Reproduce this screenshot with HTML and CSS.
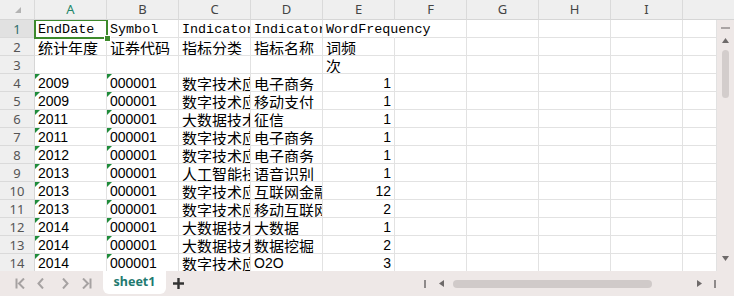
FILE: index.html
```html
<!DOCTYPE html>
<html lang="zh-CN">
<head>
    <meta charset="UTF-8">
    <title>sheet1</title>
    <link rel="stylesheet" href="styles.css">
</head>
<body>
<div class="app">
    <!-- column headers -->
    <div class="col-heads">
        <div class="col-head corner">
            <svg width="6" height="6" viewBox="0 0 6 6"><path d="M6 0V6H0Z" fill="#b3b3b3"/></svg>
        </div>
        <div class="col-head active">A</div>
        <div class="col-head">B</div>
        <div class="col-head">C</div>
        <div class="col-head">D</div>
        <div class="col-head">E</div>
        <div class="col-head">F</div>
        <div class="col-head">G</div>
        <div class="col-head">H</div>
        <div class="col-head">I</div>
        <div class="col-head filler"></div>
    </div>

    <div class="body">
        <div class="cells">
            <div class="row-head active">1</div>
            <div class="cell mono">EndDate</div>
            <div class="cell mono">Symbol</div>
            <div class="cell mono">Indicator</div>
            <div class="cell mono">Indicator</div>
            <div class="cell mono spill">WordFrequency</div>
            <div class="cell"></div><div class="cell"></div><div class="cell"></div><div class="cell"></div><div class="cell"></div>

            <div class="row-head">2</div>
            <div class="cell">统计年度</div>
            <div class="cell">证券代码</div>
            <div class="cell">指标分类</div>
            <div class="cell">指标名称</div>
            <div class="cell">词频</div>
            <div class="cell"></div><div class="cell"></div><div class="cell"></div><div class="cell"></div><div class="cell"></div>

            <div class="row-head">3</div>
            <div class="cell"></div><div class="cell"></div><div class="cell"></div><div class="cell"></div>
            <div class="cell">次</div>
            <div class="cell"></div><div class="cell"></div><div class="cell"></div><div class="cell"></div><div class="cell"></div>

            <div class="row-head">4</div>
            <div class="cell num txt">2009</div>
            <div class="cell num txt">000001</div>
            <div class="cell">数字技术应用</div>
            <div class="cell">电子商务</div>
            <div class="cell num right">1</div>
            <div class="cell"></div><div class="cell"></div><div class="cell"></div><div class="cell"></div><div class="cell"></div>

            <div class="row-head">5</div>
            <div class="cell num txt">2009</div>
            <div class="cell num txt">000001</div>
            <div class="cell">数字技术应用</div>
            <div class="cell">移动支付</div>
            <div class="cell num right">1</div>
            <div class="cell"></div><div class="cell"></div><div class="cell"></div><div class="cell"></div><div class="cell"></div>

            <div class="row-head">6</div>
            <div class="cell num txt">2011</div>
            <div class="cell num txt">000001</div>
            <div class="cell">大数据技术</div>
            <div class="cell">征信</div>
            <div class="cell num right">1</div>
            <div class="cell"></div><div class="cell"></div><div class="cell"></div><div class="cell"></div><div class="cell"></div>

            <div class="row-head">7</div>
            <div class="cell num txt">2011</div>
            <div class="cell num txt">000001</div>
            <div class="cell">数字技术应用</div>
            <div class="cell">电子商务</div>
            <div class="cell num right">1</div>
            <div class="cell"></div><div class="cell"></div><div class="cell"></div><div class="cell"></div><div class="cell"></div>

            <div class="row-head">8</div>
            <div class="cell num txt">2012</div>
            <div class="cell num txt">000001</div>
            <div class="cell">数字技术应用</div>
            <div class="cell">电子商务</div>
            <div class="cell num right">1</div>
            <div class="cell"></div><div class="cell"></div><div class="cell"></div><div class="cell"></div><div class="cell"></div>

            <div class="row-head">9</div>
            <div class="cell num txt">2013</div>
            <div class="cell num txt">000001</div>
            <div class="cell">人工智能技术</div>
            <div class="cell">语音识别</div>
            <div class="cell num right">1</div>
            <div class="cell"></div><div class="cell"></div><div class="cell"></div><div class="cell"></div><div class="cell"></div>

            <div class="row-head">10</div>
            <div class="cell num txt">2013</div>
            <div class="cell num txt">000001</div>
            <div class="cell">数字技术应用</div>
            <div class="cell">互联网金融</div>
            <div class="cell num right">12</div>
            <div class="cell"></div><div class="cell"></div><div class="cell"></div><div class="cell"></div><div class="cell"></div>

            <div class="row-head">11</div>
            <div class="cell num txt">2013</div>
            <div class="cell num txt">000001</div>
            <div class="cell">数字技术应用</div>
            <div class="cell">移动互联网</div>
            <div class="cell num right">2</div>
            <div class="cell"></div><div class="cell"></div><div class="cell"></div><div class="cell"></div><div class="cell"></div>

            <div class="row-head">12</div>
            <div class="cell num txt">2014</div>
            <div class="cell num txt">000001</div>
            <div class="cell">大数据技术</div>
            <div class="cell">大数据</div>
            <div class="cell num right">1</div>
            <div class="cell"></div><div class="cell"></div><div class="cell"></div><div class="cell"></div><div class="cell"></div>

            <div class="row-head">13</div>
            <div class="cell num txt">2014</div>
            <div class="cell num txt">000001</div>
            <div class="cell">大数据技术</div>
            <div class="cell">数据挖掘</div>
            <div class="cell num right">2</div>
            <div class="cell"></div><div class="cell"></div><div class="cell"></div><div class="cell"></div><div class="cell"></div>

            <div class="row-head">14</div>
            <div class="cell num txt">2014</div>
            <div class="cell num txt">000001</div>
            <div class="cell">数字技术应用</div>
            <div class="cell num">O2O</div>
            <div class="cell num right">3</div>
            <div class="cell"></div><div class="cell"></div><div class="cell"></div><div class="cell"></div><div class="cell"></div>

            <!-- selection box over A1 -->
            <div class="selection"><span class="handle"></span></div>
        </div>

        <div class="vscroll">
            <span class="vs-line"></span>
            <svg class="vs-up" width="7" height="5" viewBox="0 0 7 5"><path d="M3.5 0L7 5H0Z" fill="#6e6a6a"/></svg>
            <span class="vs-thumb"></span>
            <svg class="vs-down" width="7" height="5" viewBox="0 0 7 5"><path d="M0 0H7L3.5 5Z" fill="#6e6a6a"/></svg>
        </div>
    </div>

    <!-- sheet tabs -->
    <div class="tabbar">
        <div class="nav">
            <svg class="nav-first" width="10" height="11" viewBox="0 0 10 11"><path d="M1.5 0.5v10M9 0.5L4 5.5l5 5" fill="none" stroke="#a6a2a2" stroke-width="2"/></svg>
            <svg class="nav-prev" width="7" height="11" viewBox="0 0 7 11"><path d="M6 0.5L1.5 5.5 6 10.5" fill="none" stroke="#a6a2a2" stroke-width="2"/></svg>
            <svg class="nav-next" width="7" height="11" viewBox="0 0 7 11"><path d="M1 0.5l4.5 5-4.5 5" fill="none" stroke="#a6a2a2" stroke-width="2"/></svg>
            <svg class="nav-last" width="10" height="11" viewBox="0 0 10 11"><path d="M1 0.5l5 5-5 5M8.5 0.5v10" fill="none" stroke="#a6a2a2" stroke-width="2"/></svg>
        </div>
        <div class="tab">sheet1</div>
        <div class="add">
            <svg width="11" height="11" viewBox="0 0 11 11"><path d="M5.5 0v11M0 5.5h11" stroke="#333" stroke-width="2.4"/></svg>
        </div>

        <div class="hscroll">
            <span class="hs-bar"></span>
            <svg class="hs-left" width="5" height="7" viewBox="0 0 5 7"><path d="M5 0V7L0 3.5Z" fill="#6e6a6a"/></svg>
            <span class="hs-thumb"></span>
            <svg class="hs-right" width="5" height="7" viewBox="0 0 5 7"><path d="M0 0V7L5 3.5Z" fill="#6e6a6a"/></svg>
            <span class="hs-bar"></span>
        </div>
    </div>
</div>
</body>
</html>
```

FILE: styles.css
```css
body {
    margin: 0;
    background: #fff;
    font-family: "Noto Sans", "Liberation Sans", sans-serif;
}

.app {
    width: 734px;
    height: 296px;
    display: flex;
    flex-direction: column;
    overflow: hidden;
}

/* column headers */
.col-heads {
    flex: none;
    height: 20px;
    display: grid;
    grid-template-columns: 35px repeat(9, 72px) 1fr;
    background: #efefef;
}

.col-head {
    box-sizing: border-box;
    border-right: 1px solid #dadada;
    border-bottom: 1px solid #d6d6d6;
    text-align: center;
    font-size: 13px;
    line-height: 19px;
    color: #444;
}

.col-head.active {
    color: #22866a;
}

.col-head.filler {
    border-right: none;
}

.corner {
    display: flex;
    align-items: flex-end;
    justify-content: flex-start;
    padding: 0 0 6px 15px;
}

/* body */
.body {
    flex: 1;
    display: flex;
    min-height: 0;
}

.cells {
    flex: 1;
    display: grid;
    grid-template-columns: 35px repeat(9, 72px) 1fr;
    grid-auto-rows: 18px;
    overflow: hidden;
    position: relative;
}

.row-head {
    box-sizing: border-box;
    background: #efefef;
    border-right: 1px solid #d6d6d6;
    border-bottom: 1px solid #dadada;
    text-align: center;
    font-size: 13px;
    line-height: 18px;
    color: #555;
}

.row-head.active {
    background: #e1e1e1;
    color: #2f6e6c;
}

.cell {
    box-sizing: border-box;
    position: relative;
    border-right: 1px solid #e2e2e2;
    border-bottom: 1px solid #e2e2e2;
    padding: 1px 3px 0;
    overflow: hidden;
    white-space: nowrap;
    font-family: "Noto Sans CJK SC", sans-serif;
    font-size: 15px;
    line-height: 17px;
    color: #000;
}

.cell.mono {
    font-family: "Liberation Mono", monospace;
    font-size: 13.4px;
}

.cell.num {
    font-family: "Liberation Sans", sans-serif;
    font-size: 14px;
}

.cell.right {
    text-align: right;
}

.cell.spill {
    overflow: visible;
    border-right-color: transparent;
    z-index: 1;
}

/* number-stored-as-text marker */
.cell.txt::before {
    content: "";
    position: absolute;
    left: 0;
    top: 0;
    border-top: 5px solid #1f8c3a;
    border-right: 5px solid transparent;
}

.selection {
    position: absolute;
    left: 34px;
    top: -1px;
    width: 74px;
    height: 20px;
    box-sizing: border-box;
    border: 2px solid #3d8a2c;
    z-index: 2;
}

.handle {
    position: absolute;
    right: -5px;
    bottom: -5px;
    width: 5px;
    height: 5px;
    background: #3d8a2c;
    border: 1px solid #fff;
}

/* vertical scrollbar */
.vscroll {
    flex: none;
    width: 17px;
    background: #eee8e7;
    display: flex;
    flex-direction: column;
    align-items: center;
    padding-top: 7px;
    box-sizing: border-box;
}

.vs-line {
    width: 9px;
    height: 2px;
    background: #aaa4a4;
}

.vs-up {
    margin-top: 9px;
}

.vs-thumb {
    margin-top: 7px;
    width: 7px;
    height: 48px;
    border-radius: 4px;
    background: #d3cdcc;
}

.vs-down {
    margin-top: auto;
    margin-bottom: 10px;
}

/* sheet tabs */
.tabbar {
    flex: none;
    height: 25px;
    background: #eee8e7;
    display: flex;
    align-items: center;
}

.nav {
    flex: none;
    box-sizing: border-box;
    width: 103px;
    padding-left: 15px;
    display: flex;
    align-items: center;
}

.nav-prev {
    margin-left: 12px;
}

.nav-next {
    margin-left: 18px;
}

.nav-last {
    margin-left: 13px;
}

.tab {
    flex: none;
    align-self: flex-start;
    width: 63px;
    height: 23px;
    background: #fff;
    border-radius: 0 0 6px 6px;
    text-align: center;
    font-family: "Noto Sans", sans-serif;
    font-weight: bold;
    font-size: 12.5px;
    line-height: 22px;
    color: #1f7a70;
}

.add {
    flex: none;
    width: 24px;
    height: 11px;
    display: flex;
    justify-content: center;
}

.hscroll {
    flex: none;
    display: flex;
    align-items: center;
    margin-left: 234px;
}

.hs-bar {
    width: 2px;
    height: 8px;
    background: #8e8a8a;
}

.hs-left {
    margin: 0 9px 0 13px;
}

.hs-right {
    margin: 0 12px 0 45px;
}

.hs-thumb {
    width: 199px;
    height: 8px;
    border-radius: 4px;
    background: #d0cac9;
}
```
